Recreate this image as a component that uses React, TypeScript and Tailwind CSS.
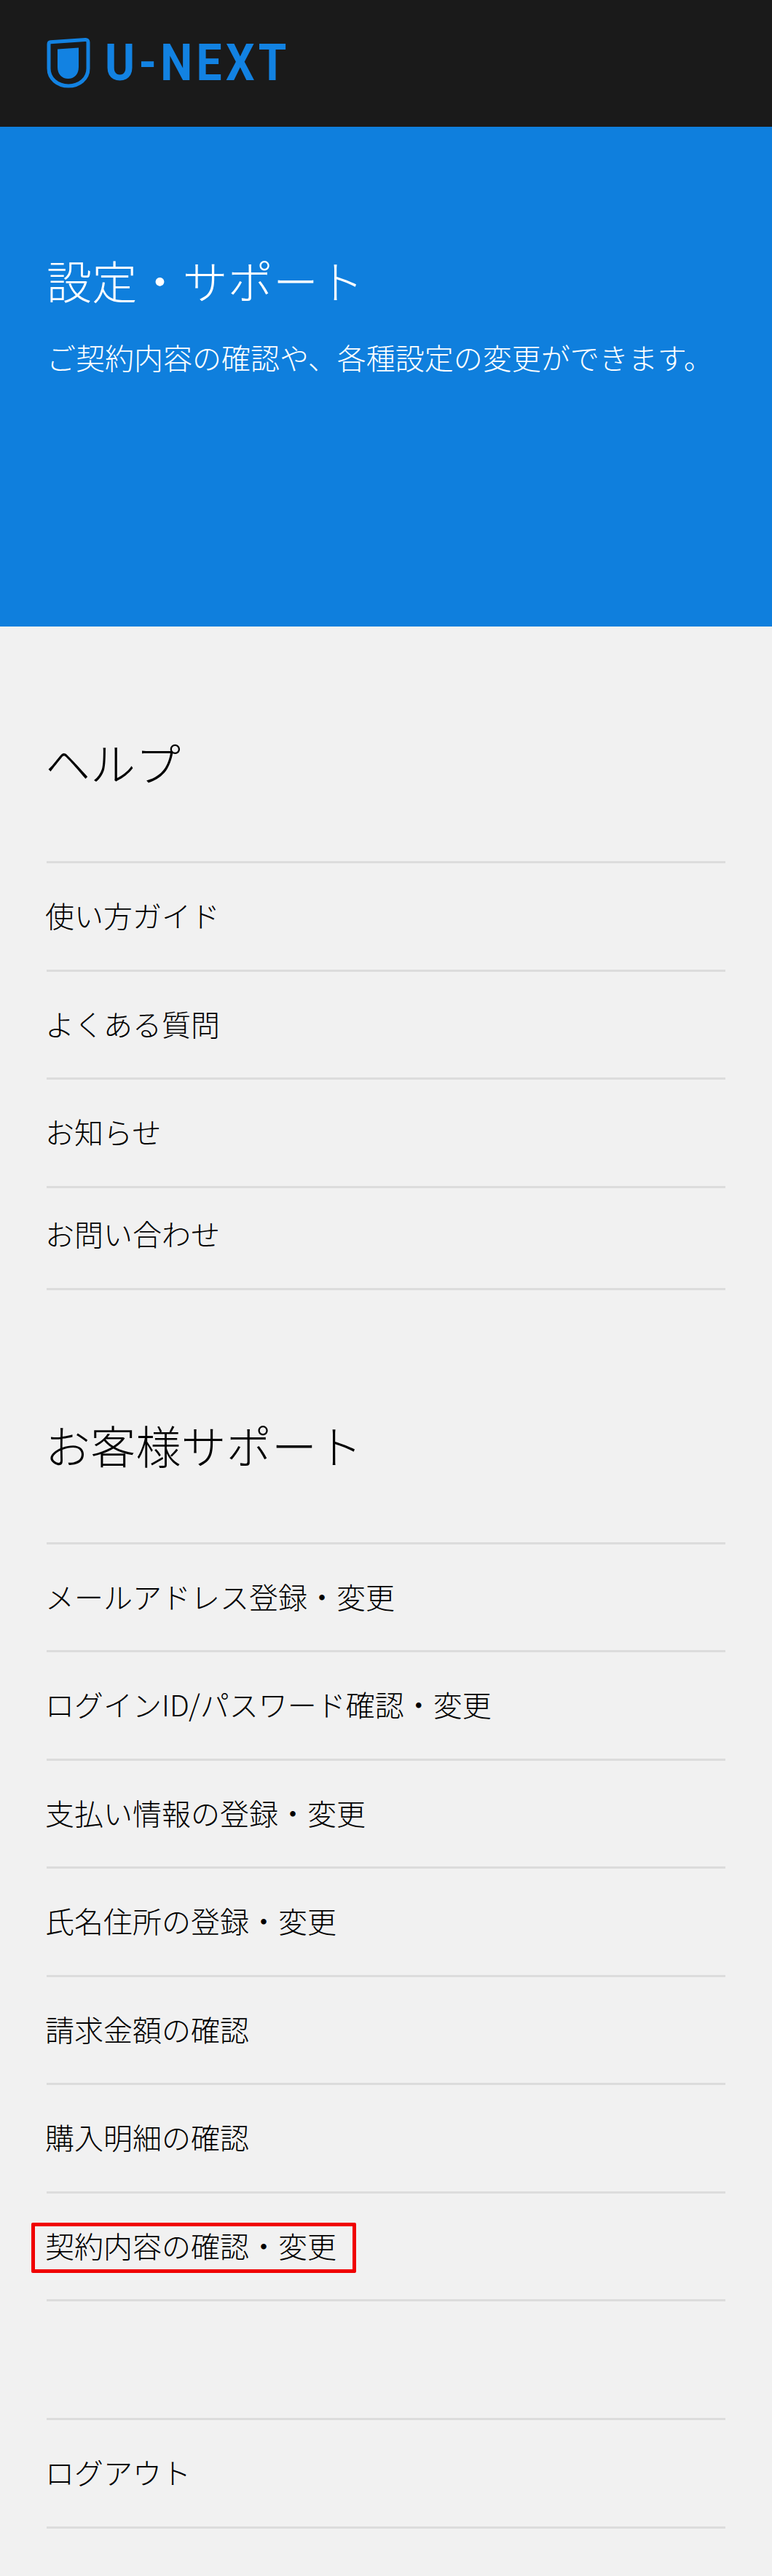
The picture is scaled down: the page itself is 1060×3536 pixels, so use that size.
const font = "font-['Noto_Sans_CJK_JP',sans-serif]";

const helpItems = ["使い方ガイド", "よくある質問", "お知らせ"];
const supportItems = [
  "メールアドレス登録・変更",
  "ログインID/パスワード確認・変更",
  "支払い情報の登録・変更",
  "氏名住所の登録・変更",
  "請求金額の確認",
  "購入明細の確認",
];

function Row({ label, short, boxed }: { label: string; short?: boolean; boxed?: boolean }) {
  return (
    <li
      className={`relative flex items-center border-b-[3px] border-[#dcdcdc] ${
        short ? "h-[140px] pb-[12px]" : "h-[148.5px] pb-[3px]"
      }`}
    >
      <span className="-ml-[2px] text-[40px] font-light leading-none text-black">{label}</span>
      {boxed && (
        <span className="absolute left-[-21px] top-[40px] h-[69px] w-[446px] rounded-[2px] border-[5px] border-[#f00000]" />
      )}
    </li>
  );
}

function Logo() {
  return (
    <div className="flex items-center">
      <svg width="60" height="70" viewBox="0 0 60 70" className="shrink-0">
        <path
          d="M3 8.5 Q3 6 5.5 5.7 L53 2.5 Q57 2.3 57 6 V42 C57 56 45 66 30 66 C15 66 3 56 3 42 Z"
          fill="none"
          stroke="#1282e2"
          strokeWidth="5"
        />
        <path d="M15 15.5 L44 13.5 V40 C44 50 38 56 29.5 56 C21 56 15 50 15 40 Z" fill="#1282e2" />
      </svg>
      <span className="-mt-[3px] ml-[20px] origin-left scale-x-[0.89] font-['Roboto',sans-serif] text-[70px] font-bold leading-none tracking-[6px] text-[#1282e2]">
        U-NEXT
      </span>
    </div>
  );
}

export default function App() {
  return (
    <div className={`${font} min-h-[3536px] w-[1060px] bg-[#f1f1f1]`}>
      <header className="flex h-[174px] items-center bg-[#1a1a1a] pl-[64px]">
        <Logo />
      </header>
      <section className="h-[686px] bg-[#0f7fdd] pl-[64px] pt-[170px] text-white">
        <h1 className="text-[62px] font-light leading-[80px] tracking-[0.2px]">設定・サポート</h1>
        <p className="mt-[38px] text-[40px] font-light leading-[56px]">ご契約内容の確認や、各種設定の変更ができます。</p>
      </section>
      <main className="px-[64px]">
        <h2 className="-ml-[2px] pb-[96px] pt-[146px] text-[62px] font-light leading-[80px] text-black">ヘルプ</h2>
        <ul className="border-t-[3px] border-[#dcdcdc]">
          {helpItems.map((item) => (
            <Row key={item} label={item} />
          ))}
          <Row label="お問い合わせ" short />
        </ul>
        <h2 className="-ml-[2px] pb-[94px] pt-[172px] text-[62px] font-light leading-[80px] tracking-[0.2px] text-black">お客様サポート</h2>
        <ul className="border-t-[3px] border-[#dcdcdc]">
          {supportItems.map((item) => (
            <Row key={item} label={item} />
          ))}
          <Row label="契約内容の確認・変更" boxed />
        </ul>
        <ul className="mt-[160px] border-t-[3px] border-[#dcdcdc]">
          <Row label="ログアウト" />
        </ul>
      </main>
    </div>
  );
}
